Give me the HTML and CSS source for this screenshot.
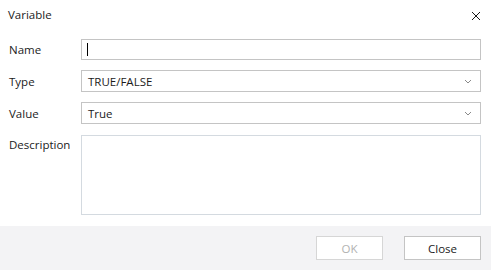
FILE: index.html
```html
<!DOCTYPE html>
<html lang="en">
<head>
    <meta charset="UTF-8">
    <meta name="viewport" content="width=device-width, initial-scale=1.0">
    <title>Variable</title>
    <link rel="stylesheet" href="styles.css">
</head>
<body>
    <div class="dialog">
        <div class="header">
            <span class="title">Variable</span>
            <svg class="close-icon" width="10" height="10" viewBox="0 0 10 10">
                <path d="M1 1 L9 9 M9 1 L1 9" stroke="#1a1a1a" stroke-width="1" fill="none"/>
            </svg>
        </div>

        <div class="form">
            <label class="label">Name</label>
            <div class="field name-field"><span class="caret"></span></div>

            <label class="label">Type</label>
            <div class="field select">
                <span>TRUE/FALSE</span>
                <svg class="chevron" width="8" height="5" viewBox="0 0 8 5">
                    <path d="M1 1 L4 4 L7 1" stroke="#8a8a8a" stroke-width="1" fill="none"/>
                </svg>
            </div>

            <label class="label">Value</label>
            <div class="field select">
                <span>True</span>
                <svg class="chevron" width="8" height="5" viewBox="0 0 8 5">
                    <path d="M1 1 L4 4 L7 1" stroke="#8a8a8a" stroke-width="1" fill="none"/>
                </svg>
            </div>

            <label class="label label-top">Description</label>
            <div class="field textarea"></div>
        </div>

        <div class="footer">
            <button class="btn btn-disabled">OK</button>
            <button class="btn">Close</button>
        </div>
    </div>
</body>
</html>
```

FILE: styles.css
```css
body {
    margin: 0;
    background: #ffffff;
    font-family: "Open Sans", "Noto Sans", sans-serif;
    font-size: 11.5px;
    color: #1b1b1b;
}
.dialog {
    width: 491px;
    height: 270px;
    display: flex;
    flex-direction: column;
}
.header {
    height: 30px;
    display: flex;
    align-items: center;
    justify-content: space-between;
    padding: 0 10px 0 8px;
}
.title {
    margin-top: -1px;
}
.close-icon {
    display: block;
    margin-top: 1px;
}
.form {
    display: grid;
    grid-template-columns: 73px 400px;
    grid-template-rows: 21px 22px 22px 80px;
    row-gap: 10px;
    padding: 9px 0 0 8px;
    align-items: center;
}
.label {
    padding-left: 1px;
}
.label-top {
    align-self: start;
    padding-top: 3px;
}
.field {
    box-sizing: border-box;
    height: 100%;
    border: 1px solid #c4c4c4;
    background: #fff;
    display: flex;
    align-items: center;
    padding: 0 6px;
}
.name-field {
    padding-left: 5px;
}
.caret {
    width: 1px;
    height: 13px;
    background: #000;
}
.select {
    justify-content: space-between;
    padding-right: 8px;
}
.chevron {
    display: block;
}
.textarea {
    border-color: #d4dae0;
    margin-top: 1px;
}
.footer {
    margin-top: auto;
    height: 44px;
    background: #f3f3f5;
    display: flex;
    justify-content: flex-end;
    align-items: flex-start;
    gap: 21px;
    padding: 10px 10px 0 0;
    box-sizing: border-box;
}
.btn {
    height: 24px;
    width: 77px;
    border: 1px solid #c4c4c4;
    background: #fff;
    font-family: "Open Sans", "Noto Sans", sans-serif;
    font-size: 11.5px;
    color: #1b1b1b;
    padding: 0;
}
.btn-disabled {
    width: 67px;
    color: #b2b2b2;
    border-color: #d6d6d6;
}
```
